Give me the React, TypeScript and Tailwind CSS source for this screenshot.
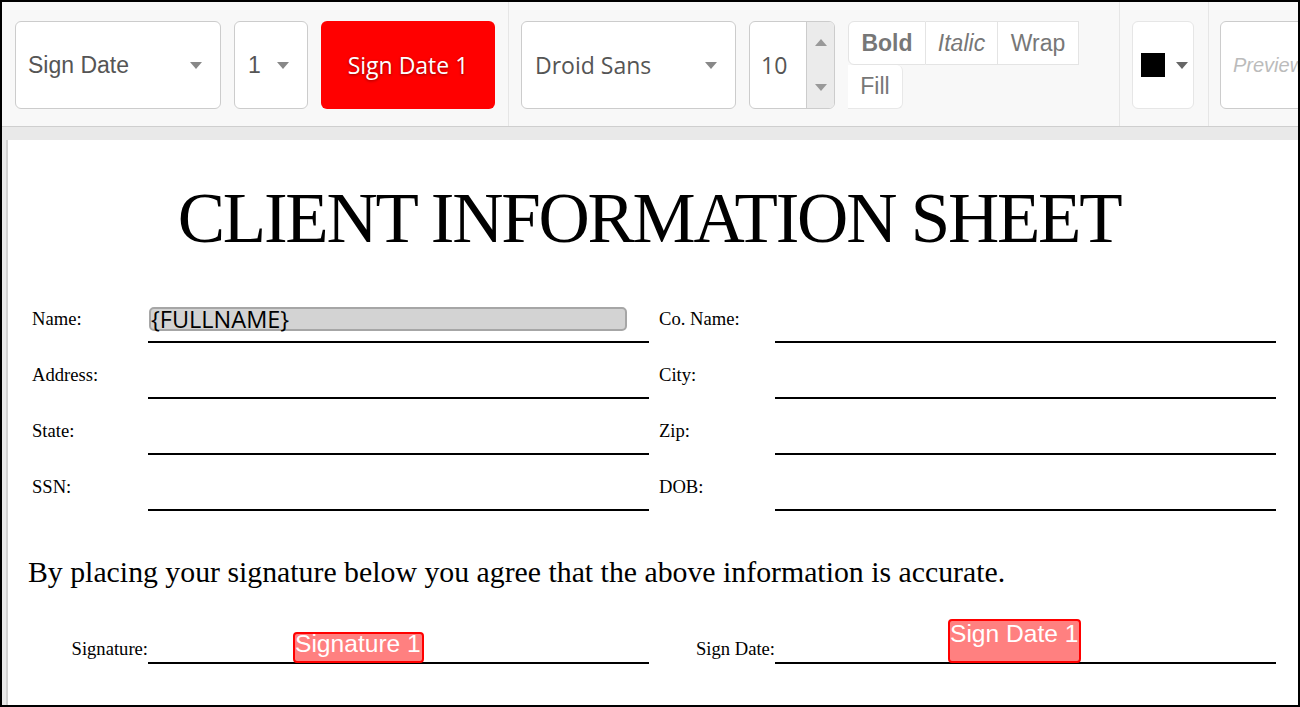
import React from "react";

const Caret = ({ color = "#888" }: { color?: string }) => (
  <svg width="12" height="7" viewBox="0 0 12 7" className="shrink-0">
    <path d="M0 0 L12 0 L6 7 Z" fill={color} />
  </svg>
);

const rows: [string, string][] = [
  ["Name:", "Co. Name:"],
  ["Address:", "City:"],
  ["State:", "Zip:"],
  ["SSN:", "DOB:"],
];

export default function App() {
  return (
    <div className="w-[1300px] h-[707px] border-2 border-black overflow-hidden flex flex-col bg-white">
      {/* Toolbar */}
      <div className="h-[125px] shrink-0 bg-[#f8f8f8] border-b border-[#cfcfcf] flex items-stretch">
        {/* group 1 */}
        <div className="flex items-start gap-[13px] pl-[13px] pr-[13px] pt-[19px] border-r border-[#e6e6e6]">
          <div className="w-[206px] h-[88px] bg-white border border-[#cccccc] rounded-[6px] flex items-center justify-between pl-[12px] pr-[18px] font-['Liberation_Sans',Arial,sans-serif] text-[23px] text-[#555]">
            <span>Sign Date</span>
            <Caret />
          </div>
          <div className="w-[74px] h-[88px] bg-white border border-[#cccccc] rounded-[6px] flex items-center justify-between pl-[13px] pr-[18px] font-['Liberation_Sans',Arial,sans-serif] text-[23px] text-[#555]">
            <span>1</span>
            <Caret />
          </div>
          <div className="w-[174px] h-[88px] bg-[#ff0000] rounded-[6px] flex items-center justify-center font-['Open_Sans',sans-serif] text-[23px] text-white [text-shadow:0_1px_3px_rgba(0,0,0,0.45)]">
            Sign Date 1
          </div>
        </div>
        {/* group 2 */}
        <div className="flex items-start gap-[13px] pl-[12px] pr-[13px] pt-[19px] border-r border-[#e6e6e6]">
          <div className="w-[215px] h-[88px] bg-white border border-[#cccccc] rounded-[6px] flex items-center justify-between pl-[13px] pr-[18px] font-['Open_Sans',sans-serif] text-[23px] text-[#555]">
            <span>Droid Sans</span>
            <Caret />
          </div>
          <div className="w-[86px] h-[88px] bg-white border border-[#cccccc] rounded-[6px] flex overflow-hidden font-['Open_Sans',sans-serif] text-[23px] text-[#555]">
            <div className="flex-1 flex items-center pl-[11px]">10</div>
            <div className="w-[28px] bg-[#ebebeb] border-l border-[#cccccc] flex flex-col items-center justify-between py-[17px]">
              <svg width="12" height="7" viewBox="0 0 12 7">
                <path d="M0 7 L12 7 L6 0 Z" fill="#999" />
              </svg>
              <svg width="12" height="7" viewBox="0 0 12 7">
                <path d="M0 0 L12 0 L6 7 Z" fill="#999" />
              </svg>
            </div>
          </div>
          <div className="w-[258px] flex flex-wrap content-start font-['Liberation_Sans',Arial,sans-serif] text-[23px] text-[#777]">
            <div className="h-[44px] w-[78px] bg-white border border-[#e4e4e4] rounded-l-[6px] flex items-center justify-center font-bold">
              Bold
            </div>
            <div className="h-[44px] w-[72px] bg-white border-y border-r border-[#e4e4e4] flex items-center justify-center italic">
              Italic
            </div>
            <div className="h-[44px] w-[81px] bg-white border-y border-r border-[#e4e4e4] flex items-center justify-center">
              Wrap
            </div>
            <div className="h-[44px] w-[55px] bg-white border-r border-b border-[#e8e8e8] rounded-r-[6px] flex items-center justify-center">
              Fill
            </div>
          </div>
        </div>
        {/* group 3 */}
        <div className="flex items-start pl-[12px] pr-[14px] pt-[19px] border-r border-[#e6e6e6]">
          <div className="w-[62px] h-[88px] bg-white border border-[#e6e6e6] rounded-[6px] flex items-center pl-[8px] gap-[11px]">
            <div className="w-[24px] h-[24px] bg-black" />
            <Caret color="#666" />
          </div>
        </div>
        {/* group 4 */}
        <div className="flex items-start pl-[11px] pt-[19px]">
          <div className="w-[200px] h-[88px] bg-white border border-[#cccccc] rounded-[6px] flex items-center pl-[12px] font-['Liberation_Sans',Arial,sans-serif] italic text-[20px] text-[#bbbbbb]">
            Preview
          </div>
        </div>
      </div>

      {/* Page area */}
      <div className="flex-1 bg-[#e9e9e9] pl-[4px] pt-[13px] min-h-0">
        <div className="h-full bg-white border-l-2 border-[#d2d2d2] font-['Liberation_Serif','Times_New_Roman',serif] text-black">
          <div className="pt-[42px] pr-[8px] text-center text-[71px] leading-[72px] tracking-[-2.25px]">
            CLIENT INFORMATION SHEET
          </div>

          <div className="mt-[33px] pl-[24px] flex flex-col">
            {rows.map(([l, r], i) => (
              <div key={l} className="flex items-end h-[56px]">
                <div className="w-[116px] pb-[14px] text-[18.6px] leading-[20px]">{l}</div>
                <div className="relative w-[501px] h-full border-b-2 border-black">
                  {i === 0 && (
                    <div className="absolute left-[1px] top-[20px] w-[478px] h-[24px] bg-[#d3d3d3] border-2 border-[#a6a6a6] rounded-[5px] font-['Open_Sans',sans-serif] text-[23.5px] leading-[20px] text-black pl-0 whitespace-nowrap">
                      {"{FULLNAME}"}
                    </div>
                  )}
                </div>
                <div className="w-[10px]" />
                <div className="w-[116px] pb-[14px] text-[18.6px] leading-[20px]">{r}</div>
                <div className="w-[501px] h-full border-b-2 border-black" />
              </div>
            ))}
          </div>

          <div className="mt-[44px] pl-[20px] text-[29.8px] leading-[34px] whitespace-nowrap">
            By placing your signature below you agree that the above information is accurate.
          </div>

          <div className="mt-[19px] pl-[24px] flex items-end h-[56px]">
            <div className="w-[116px] pb-[5px] text-right text-[18.6px] leading-[20px]">Signature:</div>
            <div className="relative w-[501px] h-full border-b-2 border-black">
              <div className="absolute left-[145px] top-[24px] w-[131px] h-[31px] bg-[#ff8080] border-2 border-[#ff0000] rounded-[4px] font-['Liberation_Sans',Arial,sans-serif] text-[24.6px] leading-[19px] text-white whitespace-nowrap">
                Signature 1
              </div>
            </div>
            <div className="w-[10px]" />
            <div className="w-[116px] pb-[5px] text-right text-[18.6px] leading-[20px]">Sign Date:</div>
            <div className="relative w-[501px] h-full border-b-2 border-black">
              <div className="absolute left-[173px] top-[11px] w-[133px] h-[44px] bg-[#ff8080] border-2 border-[#ff0000] rounded-[4px] pt-[3px] font-['Liberation_Sans',Arial,sans-serif] text-[24.6px] leading-[19px] text-white whitespace-nowrap">
                Sign Date 1
              </div>
            </div>
          </div>
        </div>
      </div>
    </div>
  );
}
